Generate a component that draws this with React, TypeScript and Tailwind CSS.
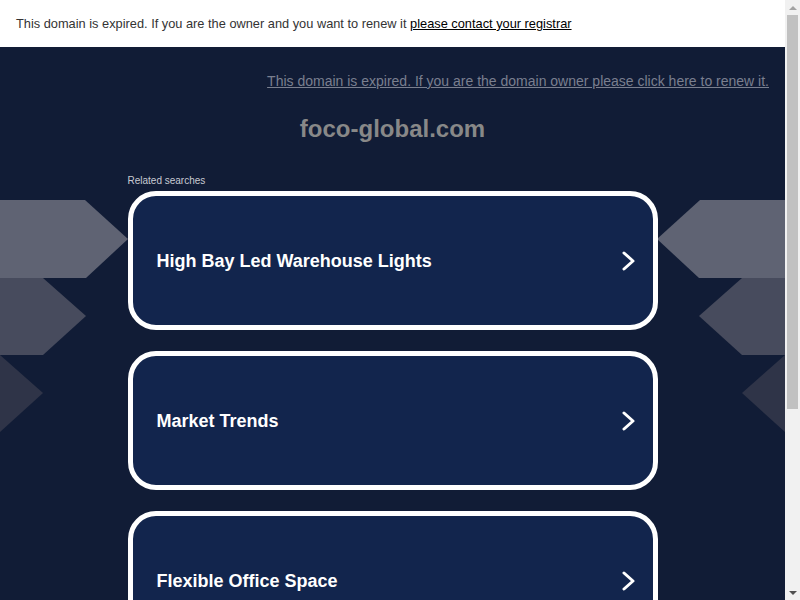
import { ReactNode } from 'react'

const searches = ['High Bay Led Warehouse Lights', 'Market Trends', 'Flexible Office Space']

const Arrows = ({ flip }: { flip?: boolean }) => (
  <svg
    width="130"
    height="240"
    viewBox="0 0 130 240"
    className={flip ? 'absolute right-0 top-[153px] -scale-x-100' : 'absolute left-0 top-[153px]'}
  >
    <polygon points="0,0 85,0 128,39 86,78 0,78" fill="#5f6373" />
    <polygon points="0,78 43,78 86,116 43,155 0,155" fill="#474b5d" />
    <polygon points="0,155 43,193 0,232" fill="#2f3448" />
  </svg>
)

const SearchCard = ({ children }: { children: ReactNode }) => (
  <a
    href="#"
    className="flex h-[139px] w-[530px] items-center justify-between rounded-[28px] border-[5px] border-white bg-[#12254d] pl-6 pr-[17px] pt-[1px]"
  >
    <span className="text-[18px] font-bold text-white">{children}</span>
    <svg width="14" height="20" viewBox="0 0 14 20">
      <polyline points="2,2 11,10 2,18" fill="none" stroke="white" strokeWidth="3" strokeLinecap="round" strokeLinejoin="round" />
    </svg>
  </a>
)

const Scrollbar = () => (
  <div className="flex h-full w-[15px] shrink-0 flex-col bg-[#f1f1f1]">
    <div className="flex h-[15px] items-center justify-center">
      <div className="h-0 w-0 border-x-[4px] border-b-[4px] border-x-transparent border-b-[#a3a3a3]" />
    </div>
    <div className="flex-1 px-[2px]">
      <div className="h-[394px] bg-[#c1c1c1]" />
    </div>
    <div className="flex h-[15px] items-center justify-center">
      <div className="h-0 w-0 border-x-[4px] border-t-[4px] border-x-transparent border-t-[#505050]" />
    </div>
  </div>
)

export default function App() {
  return (
    <div className="flex h-screen overflow-hidden font-['Liberation_Sans',Arial,sans-serif]">
      <div className="min-w-0 flex-1 overflow-hidden">
        <div className="flex h-[47px] items-center bg-white pl-4 text-[12.8px] text-[#333]">
          This domain is expired. If you are the owner and you want to renew it&nbsp;
          <a href="#" className="text-black underline">please contact your registrar</a>
        </div>

        <div className="relative h-[821px] bg-[#111c36]">
          <Arrows />
          <Arrows flip />

          <div className="relative pr-4 pt-[26px] text-right text-[14px] leading-4">
            <a href="#" className="text-[#7a7f8f] underline">
              This domain is expired. If you are the domain owner please click here to renew it.
            </a>
          </div>

          <h1 className="relative mt-[26px] text-center text-[24px] font-bold leading-7 text-[#888888]">
            foco-global.com
          </h1>

          <div className="relative mx-auto mt-[32px] w-[530px]">
            <div className="text-[10px] leading-[12px] text-[#c8cad2]">Related searches</div>
            <div className="mt-1 flex flex-col gap-[21px]">
              {searches.map(s => (
                <SearchCard key={s}>{s}</SearchCard>
              ))}
            </div>
          </div>
        </div>
      </div>
      <Scrollbar />
    </div>
  )
}
